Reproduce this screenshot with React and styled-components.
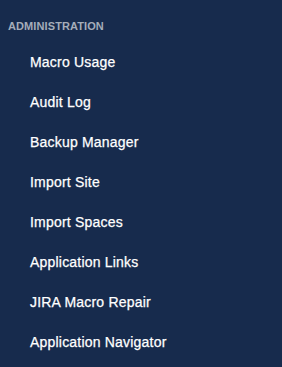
import React from "react";
import styled, { createGlobalStyle } from "styled-components";

const Global = createGlobalStyle`
  html, body { margin: 0; padding: 0; background: #172B4D; }
  body { font-family: "Liberation Sans", Arial, Helvetica, sans-serif; }
`;

const Sidebar = styled.nav`
  width: 282px;
  height: 367px;
  box-sizing: border-box;
  background: #172B4D;
  padding-top: 19px;
  display: flex;
  flex-direction: column;
  overflow: hidden;
`;

const Heading = styled.h3`
  margin: 0 0 9px 0;
  padding-left: 8px;
  font-size: 11px;
  line-height: 14px;
  font-weight: 700;
  letter-spacing: 0.1px;
  text-transform: uppercase;
  color: #A5ADBA;
`;

const List = styled.ul`
  list-style: none;
  margin: 0;
  padding: 0;
  display: flex;
  flex-direction: column;
`;

const Item = styled.li`
  height: 40px;
  line-height: 40px;
  padding-left: 30px;
  font-size: 14px;
  letter-spacing: 0.2px;
  color: #FFFFFF;
  -webkit-text-stroke: 0.25px #FFFFFF;
  white-space: nowrap;
`;

const items = [
  "Macro Usage",
  "Audit Log",
  "Backup Manager",
  "Import Site",
  "Import Spaces",
  "Application Links",
  "JIRA Macro Repair",
  "Application Navigator",
];

export default function App() {
  return (
    <>
      <Global />
      <Sidebar>
        <Heading>Administration</Heading>
        <List>
          {items.map((t) => (
            <Item key={t}>{t}</Item>
          ))}
        </List>
      </Sidebar>
    </>
  );
}
